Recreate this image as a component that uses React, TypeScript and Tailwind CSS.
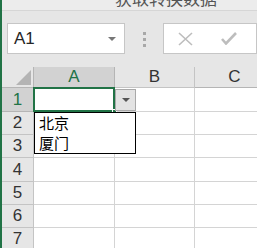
const rowHeights = [24, 23, 23, 24, 23, 23, 23]

const font = { fontFamily: '"Liberation Sans", Arial, sans-serif' }
const cjk = { fontFamily: '"Noto Sans CJK SC", "Liberation Sans", sans-serif' }

function Caret({ color = "#6b6b6b" }: { color?: string }) {
  return (
    <svg width="8" height="4" viewBox="0 0 8 4">
      <path d="M0 0h8L4 4z" fill={color} />
    </svg>
  )
}

function Row({ n, h }: { n: number; h: number }) {
  const selected = n === 1
  return (
    <div className="flex shrink-0" style={{ height: h }}>
      <div
        className={`w-[32px] shrink-0 border-r border-b flex items-center justify-center text-[17px] ${
          selected
            ? "bg-[#d2d2d2] text-[#217346] border-[#b5b5b5]"
            : "bg-[#e6e6e6] text-[#333] border-[#c4c4c4]"
        }`}
      >
        {n}
      </div>
      <div className="relative w-[81px] shrink-0 bg-white border-r border-b border-[#d4d4d4]">
        {selected && (
          <>
            <div className="absolute -left-[1px] -top-[1px] -right-[1px] bottom-[-1px] border-2 border-[#217346]" />
            <div className="absolute right-[-3px] bottom-[-3px] w-[5px] h-[5px] bg-[#217346] border border-white" />
          </>
        )}
      </div>
      <div className="w-[80px] shrink-0 bg-white border-r border-b border-[#d4d4d4]" />
      <div className="w-[80px] shrink-0 bg-white border-r border-b border-[#d4d4d4]" />
    </div>
  )
}

export default function App() {
  return (
    <div
      className="relative w-[257px] h-[248px] overflow-hidden bg-[#e6e6e6] border-l-2 border-[#217346] flex flex-col"
      style={font}
    >
      {/* title strip, text clipped by the window edge */}
      <div className="h-[11px] shrink-0 bg-[#ececec] border-b border-[#d6d6d6] overflow-hidden pl-[113px]">
        <span className="block mt-[-11px] text-[17px] leading-[17px] text-[#555]" style={cjk}>
          获取转换数据
        </span>
      </div>

      {/* name box + formula bar */}
      <div className="h-[56px] shrink-0 flex items-start pt-[12px]">
        <div className="ml-[5px] w-[126px] h-[31px] bg-white border border-[#c6c6c6] flex items-center justify-between pl-[6px] pr-[8px]">
          <span className="text-[17px] text-[#262626]">A1</span>
          <Caret color="#777" />
        </div>
        <div className="ml-[18px] mt-[9px] flex flex-col gap-[3px]">
          <div className="w-[3px] h-[3px] bg-[#a8a8a8]" />
          <div className="w-[3px] h-[3px] bg-[#a8a8a8]" />
          <div className="w-[3px] h-[3px] bg-[#a8a8a8]" />
        </div>
        <div className="ml-[17px] w-[100px] h-[31px] bg-white border border-[#c6c6c6] flex items-center pl-[14px] gap-[28px]">
          <svg width="15" height="14" viewBox="0 0 15 14">
            <path d="M1 1l13 12M14 1L1 13" stroke="#bdbdbd" strokeWidth="1.6" fill="none" />
          </svg>
          <svg width="16" height="13" viewBox="0 0 16 13">
            <path d="M1 7l4 4.5L15 1" stroke="#bdbdbd" strokeWidth="2.6" fill="none" />
          </svg>
        </div>
      </div>

      {/* column headers */}
      <div className="h-[21px] shrink-0 flex">
        <div className="w-[32px] shrink-0 border-r border-b border-[#b5b5b5] flex items-end justify-end pr-[2px] pb-[2px]">
          <svg width="15" height="15" viewBox="0 0 15 15">
            <path d="M15 0v15H0z" fill="#b4b4b4" />
          </svg>
        </div>
        <div className="w-[81px] shrink-0 bg-[#d2d2d2] border-r border-b border-[#b5b5b5] flex items-center justify-center text-[17px] text-[#217346]">
          A
        </div>
        <div className="w-[80px] shrink-0 border-r border-b border-[#c4c4c4] flex items-center justify-center text-[17px] text-[#333]">
          B
        </div>
        <div className="w-[80px] shrink-0 border-r border-b border-[#b5b5b5] flex items-center justify-center text-[17px] text-[#333]">
          C
        </div>
      </div>

      {rowHeights.map((h, i) => (
        <Row key={i} n={i + 1} h={h} />
      ))}

      {/* validation dropdown */}
      <div className="absolute left-[113px] top-[89px] w-[21px] h-[22px] bg-[#e3e3e3] border border-[#a9a9a9] flex items-center justify-center">
        <Caret color="#555" />
      </div>
      <div className="absolute left-[32px] top-[112px] w-[102px] h-[42px] bg-white border border-black pl-[4px] text-[15px] leading-[20px] text-black" style={cjk}>
        <div>北京</div>
        <div>厦门</div>
      </div>
    </div>
  )
}
